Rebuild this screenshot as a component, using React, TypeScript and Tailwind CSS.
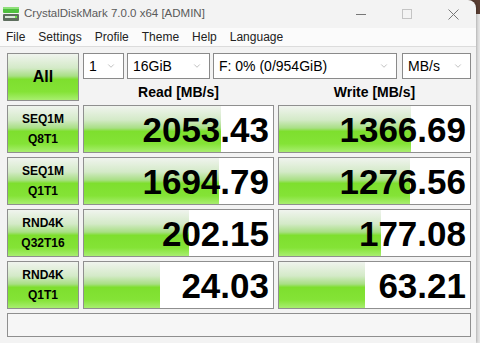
import { ChevronDown } from 'lucide-react';

const rows = [
  { l1: 'SEQ1M', l2: 'Q8T1', read: '2053.43', readPct: 72.5, write: '1366.69', writePct: 69 },
  { l1: 'SEQ1M', l2: 'Q1T1', read: '1694.79', readPct: 71.5, write: '1276.56', writePct: 68.5 },
  { l1: 'RND4K', l2: 'Q32T16', read: '202.15', readPct: 55.5, write: '177.08', writePct: 53.5 },
  { l1: 'RND4K', l2: 'Q1T1', read: '24.03', readPct: 40, write: '63.21', writePct: 45 },
];

const menus = ['File', 'Settings', 'Profile', 'Theme', 'Help', 'Language'];

const greenGrad =
  'bg-[linear-gradient(to_bottom,#f0f4ee_0%,#d4eac8_30%,#a8df84_48%,#7edf2e_55%,#84e336_82%,#a8ee70_100%)]';

const Select = ({ label, width }: { label: string; width: string }) => (
  <div
    className={`${width} h-[26px] flex items-center justify-between border border-[#8a8a8a] bg-white pl-[5px] pr-[7px] text-[14px] text-black`}
  >
    <span>{label}</span>
    <ChevronDown size={10} strokeWidth={1.1} className="text-[#777]" />
  </div>
);

const ValueBox = ({ value, pct, width }: { value: string; pct: number; width: string }) => (
  <div className={`${width} relative h-[48px] border border-[#8f8f8f] bg-white`}>
    <div className={`absolute left-0 top-0 bottom-0 ${greenGrad}`} style={{ width: `${pct}%` }} />
    <div className="relative flex h-full items-center justify-end pr-[4px] text-[35px] font-bold leading-none text-black [font-family:'Liberation_Sans',sans-serif]">
      {value}
    </div>
  </div>
);

export default function App() {
  return (
    <div className="relative w-[480px] h-[343px] overflow-hidden bg-[linear-gradient(to_right,#d4d4d4,#e6e6e6)] [font-family:'Liberation_Sans',sans-serif]">
      <div className="absolute right-0 top-0 h-[14px] w-[20px] bg-[#5b3f33]" />
      <div className="relative flex h-full w-[476px] flex-col rounded-tr-[8px] bg-[#f3f3f3] shadow-[1px_0_3px_rgba(0,0,0,0.25)]">
        {/* title bar */}
        <div className="flex h-[28px] items-center">
          <svg width="16" height="14" viewBox="0 0 16 14" className="ml-[3px] mr-[5px]">
            <rect x="0" y="0" width="16" height="6" rx="1" fill="#4fbf3f" />
            <rect x="0" y="0" width="16" height="2" fill="#8fe07a" />
            <rect x="0" y="7" width="16" height="7" rx="1" fill="#5e6e5e" />
            <rect x="2" y="9" width="12" height="2" fill="#d8e8d8" />
            <rect x="12" y="9" width="2" height="2" fill="#6fe04a" />
          </svg>
          <span className="text-[11.5px] text-[#5a5a5a]">CrystalDiskMark 7.0.0 x64 [ADMIN]</span>
          <div className="ml-auto flex h-full items-center text-[#777]">
            <div className="flex w-[46px] justify-center">
              <div className="h-px w-[10px] bg-[#777]" />
            </div>
            <div className="flex w-[46px] justify-center">
              <div className="h-[10px] w-[10px] border border-[#c4c4c4]" />
            </div>
            <div className="flex w-[46px] justify-center">
              <svg width="11" height="11" viewBox="0 0 11 11">
                <path d="M0.5 0.5 L10.5 10.5 M10.5 0.5 L0.5 10.5" stroke="#777" strokeWidth="1" />
              </svg>
            </div>
          </div>
        </div>
        {/* menu bar */}
        <div className="flex h-[19px] items-center gap-[13px] border-b border-[#dcdcdc] bg-[#fbfbfb] pl-[6px] text-[12px] text-[#222]">
          {menus.map((m) => (
            <span key={m}>{m}</span>
          ))}
        </div>
        {/* body */}
        <div className="flex flex-1 flex-col gap-[4px] bg-[#f3f3f3] pl-[7px] pt-[6px]">
          <div className="flex gap-[4px]">
            <div
              className={`flex h-[48px] w-[72px] items-center justify-center border border-[#8f8f8f] text-[16px] font-bold text-black ${greenGrad}`}
            >
              All
            </div>
            <div className="flex flex-col">
              <div className="flex h-[26px]">
                <Select label="1" width="w-[41px]" />
                <div className="w-[3px]" />
                <Select label="16GiB" width="w-[83px]" />
                <div className="w-[3px]" />
                <Select label="F: 0% (0/954GiB)" width="w-[184px]" />
                <div className="w-[5px]" />
                <Select label="MB/s" width="w-[69px]" />
              </div>
              <div className="flex h-[22px] items-center gap-[4px] pt-[4px] text-[14px] font-bold text-black">
                <div className="w-[191px] text-center">Read [MB/s]</div>
                <div className="w-[193px] text-center">Write [MB/s]</div>
              </div>
            </div>
          </div>
          {rows.map((r, i) => (
            <div key={i} className="flex gap-[4px]">
              <div
                className={`flex h-[48px] w-[72px] flex-col items-center justify-center gap-[5px] border border-[#8f8f8f] text-[12px] font-bold leading-[15px] text-black ${greenGrad}`}
              >
                <span>{r.l1}</span>
                <span>{r.l2}</span>
              </div>
              <ValueBox value={r.read} pct={r.readPct} width="w-[191px]" />
              <ValueBox value={r.write} pct={r.writePct} width="w-[193px]" />
            </div>
          ))}
          <div className="h-[24px] w-[464px] border border-[#8f8f8f] bg-[#f6f6f6]" />
        </div>
      </div>
    </div>
  );
}
